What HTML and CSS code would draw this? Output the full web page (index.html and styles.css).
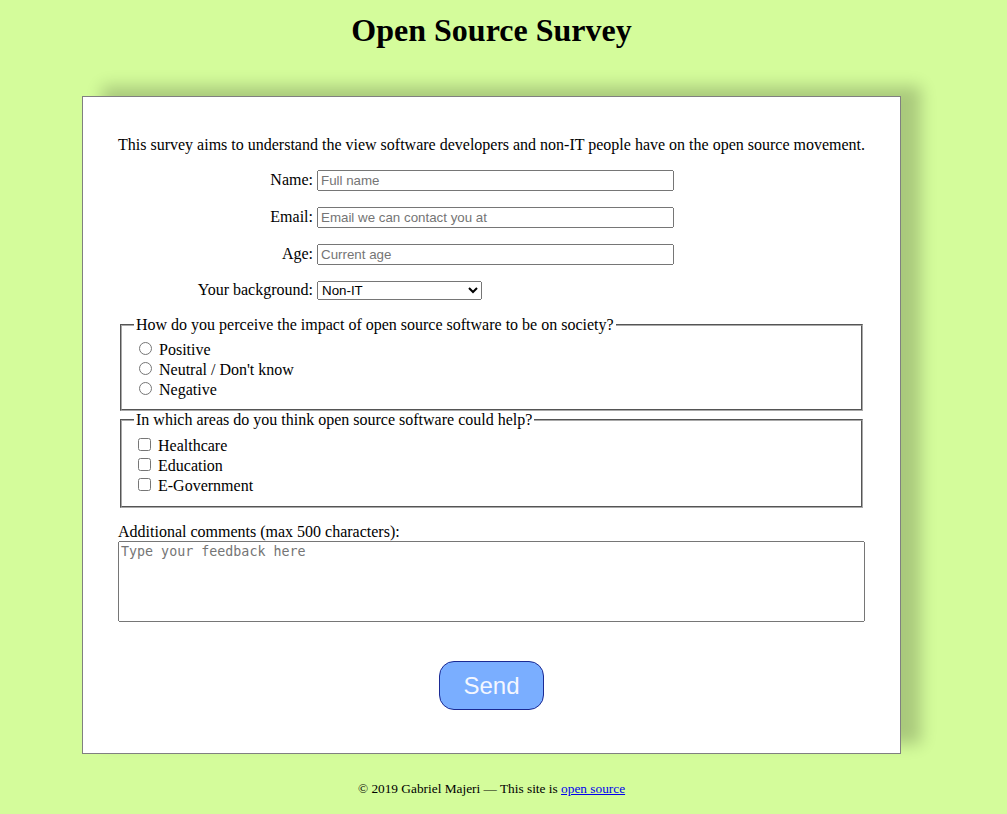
FILE: index.html
```html
<!DOCTYPE html>
<html lang="en">
<head>
<meta charset="utf-8">
<title>Open Source Survey</title>
<link rel="stylesheet" href="styles.css">
</head>
<body>
<div class="page">
  <h1 class="title">Open Source Survey</h1>
  <main class="card">
    <form class="survey">
      <p class="intro">This survey aims to understand the view software developers and non-IT people have on the open source movement.</p>
      <div class="row">
        <label class="row-label" for="name">Name:</label>
        <input class="field" id="name" type="text" placeholder="Full name">
      </div>
      <div class="row">
        <label class="row-label" for="email">Email:</label>
        <input class="field" id="email" type="email" placeholder="Email we can contact you at">
      </div>
      <div class="row">
        <label class="row-label" for="age">Age:</label>
        <input class="field" id="age" type="text" placeholder="Current age">
      </div>
      <div class="row">
        <label class="row-label" for="bg">Your background:</label>
        <select class="select" id="bg">
          <option>Non-IT</option>
          <option>IT</option>
        </select>
      </div>
      <fieldset class="group group-first">
        <legend class="legend">How do you perceive the impact of open source software to be on society?</legend>
        <div class="option"><input type="radio" name="impact" id="r1"><label for="r1"> Positive</label></div>
        <div class="option"><input type="radio" name="impact" id="r2"><label for="r2"> Neutral / Don't know</label></div>
        <div class="option"><input type="radio" name="impact" id="r3"><label for="r3"> Negative</label></div>
      </fieldset>
      <fieldset class="group group-second">
        <legend class="legend">In which areas do you think open source software could help?</legend>
        <div class="option"><input type="checkbox" id="c1"><label for="c1"> Healthcare</label></div>
        <div class="option"><input type="checkbox" id="c2"><label for="c2"> Education</label></div>
        <div class="option"><input type="checkbox" id="c3"><label for="c3"> E-Government</label></div>
      </fieldset>
      <label class="comments-label" for="comments">Additional comments (max 500 characters):</label>
      <textarea class="comments" id="comments" rows="5" maxlength="500" placeholder="Type your feedback here"></textarea>
      <div class="actions">
        <button class="send" type="submit">Send</button>
      </div>
    </form>
  </main>
  <footer class="footer">© 2019 Gabriel Majeri — This site is <a class="footer-link" href="#">open source</a></footer>
</div>
</body>
</html>
```

FILE: styles.css
```css
html {
  background: #d4fc9b;
}

body {
  margin: 0;
  background: #d4fc9b;
  font-family: "Liberation Serif", "Times New Roman", serif;
  font-size: 16px;
  color: #000;
}

.page {
  width: 983px;
}

.title {
  margin: 12px 0 47px;
  text-align: center;
  font-size: 32px;
  font-weight: bold;
}

.card {
  margin: 0 82px;
  background: #fff;
  border: 1px solid #808080;
  box-shadow: 20px -10px 15px rgba(0, 0, 0, 0.2);
  padding: 39px 35px 43px;
}

.survey {
  margin: 0;
}

.intro {
  margin: 0 0 16px;
  white-space: nowrap;
}

.row {
  display: flex;
  align-items: baseline;
  margin-bottom: 16px;
}

.row-label {
  width: 195px;
  text-align: right;
  margin-right: 4px;
  flex: none;
}

.field {
  box-sizing: border-box;
  width: 357px;
  font-family: "Liberation Sans", Arial, sans-serif;
  font-size: 13.333px;
}

.select {
  width: 165px;
  font-family: "Liberation Sans", Arial, sans-serif;
  font-size: 13.333px;
}

.group {
  margin: 0 2px;
  padding: 5.6px 12px 10px;
  border: 2px groove #a9a9a9;
}

.group-first {
  margin-top: 16px;
  padding-top: 4.6px;
}

.group-second {
  padding-top: 6.6px;
  padding-bottom: 11px;
}

.legend {
  padding: 0 2px;
}

.option {
  margin: 0;
}

.comments-label {
  display: block;
  margin-top: 15px;
}

.comments {
  display: block;
  box-sizing: border-box;
  width: 100%;
  height: 81px;
  font-family: "DejaVu Sans Mono", "Liberation Mono", monospace;
  font-size: 13.333px;
  resize: none;
}

.actions {
  display: flex;
  justify-content: center;
  margin-top: 39px;
}

.send {
  box-sizing: border-box;
  width: 105px;
  height: 49px;
  background: #7aaeff;
  border: 1px solid #1b2a94;
  border-radius: 15px;
  color: #f4f7ff;
  font-family: "Liberation Sans", Arial, sans-serif;
  font-size: 24px;
  padding: 0;
}

.footer {
  margin-top: 27px;
  text-align: center;
  font-size: 13.333px;
}

.footer-link {
  color: #0000ee;
}
```
